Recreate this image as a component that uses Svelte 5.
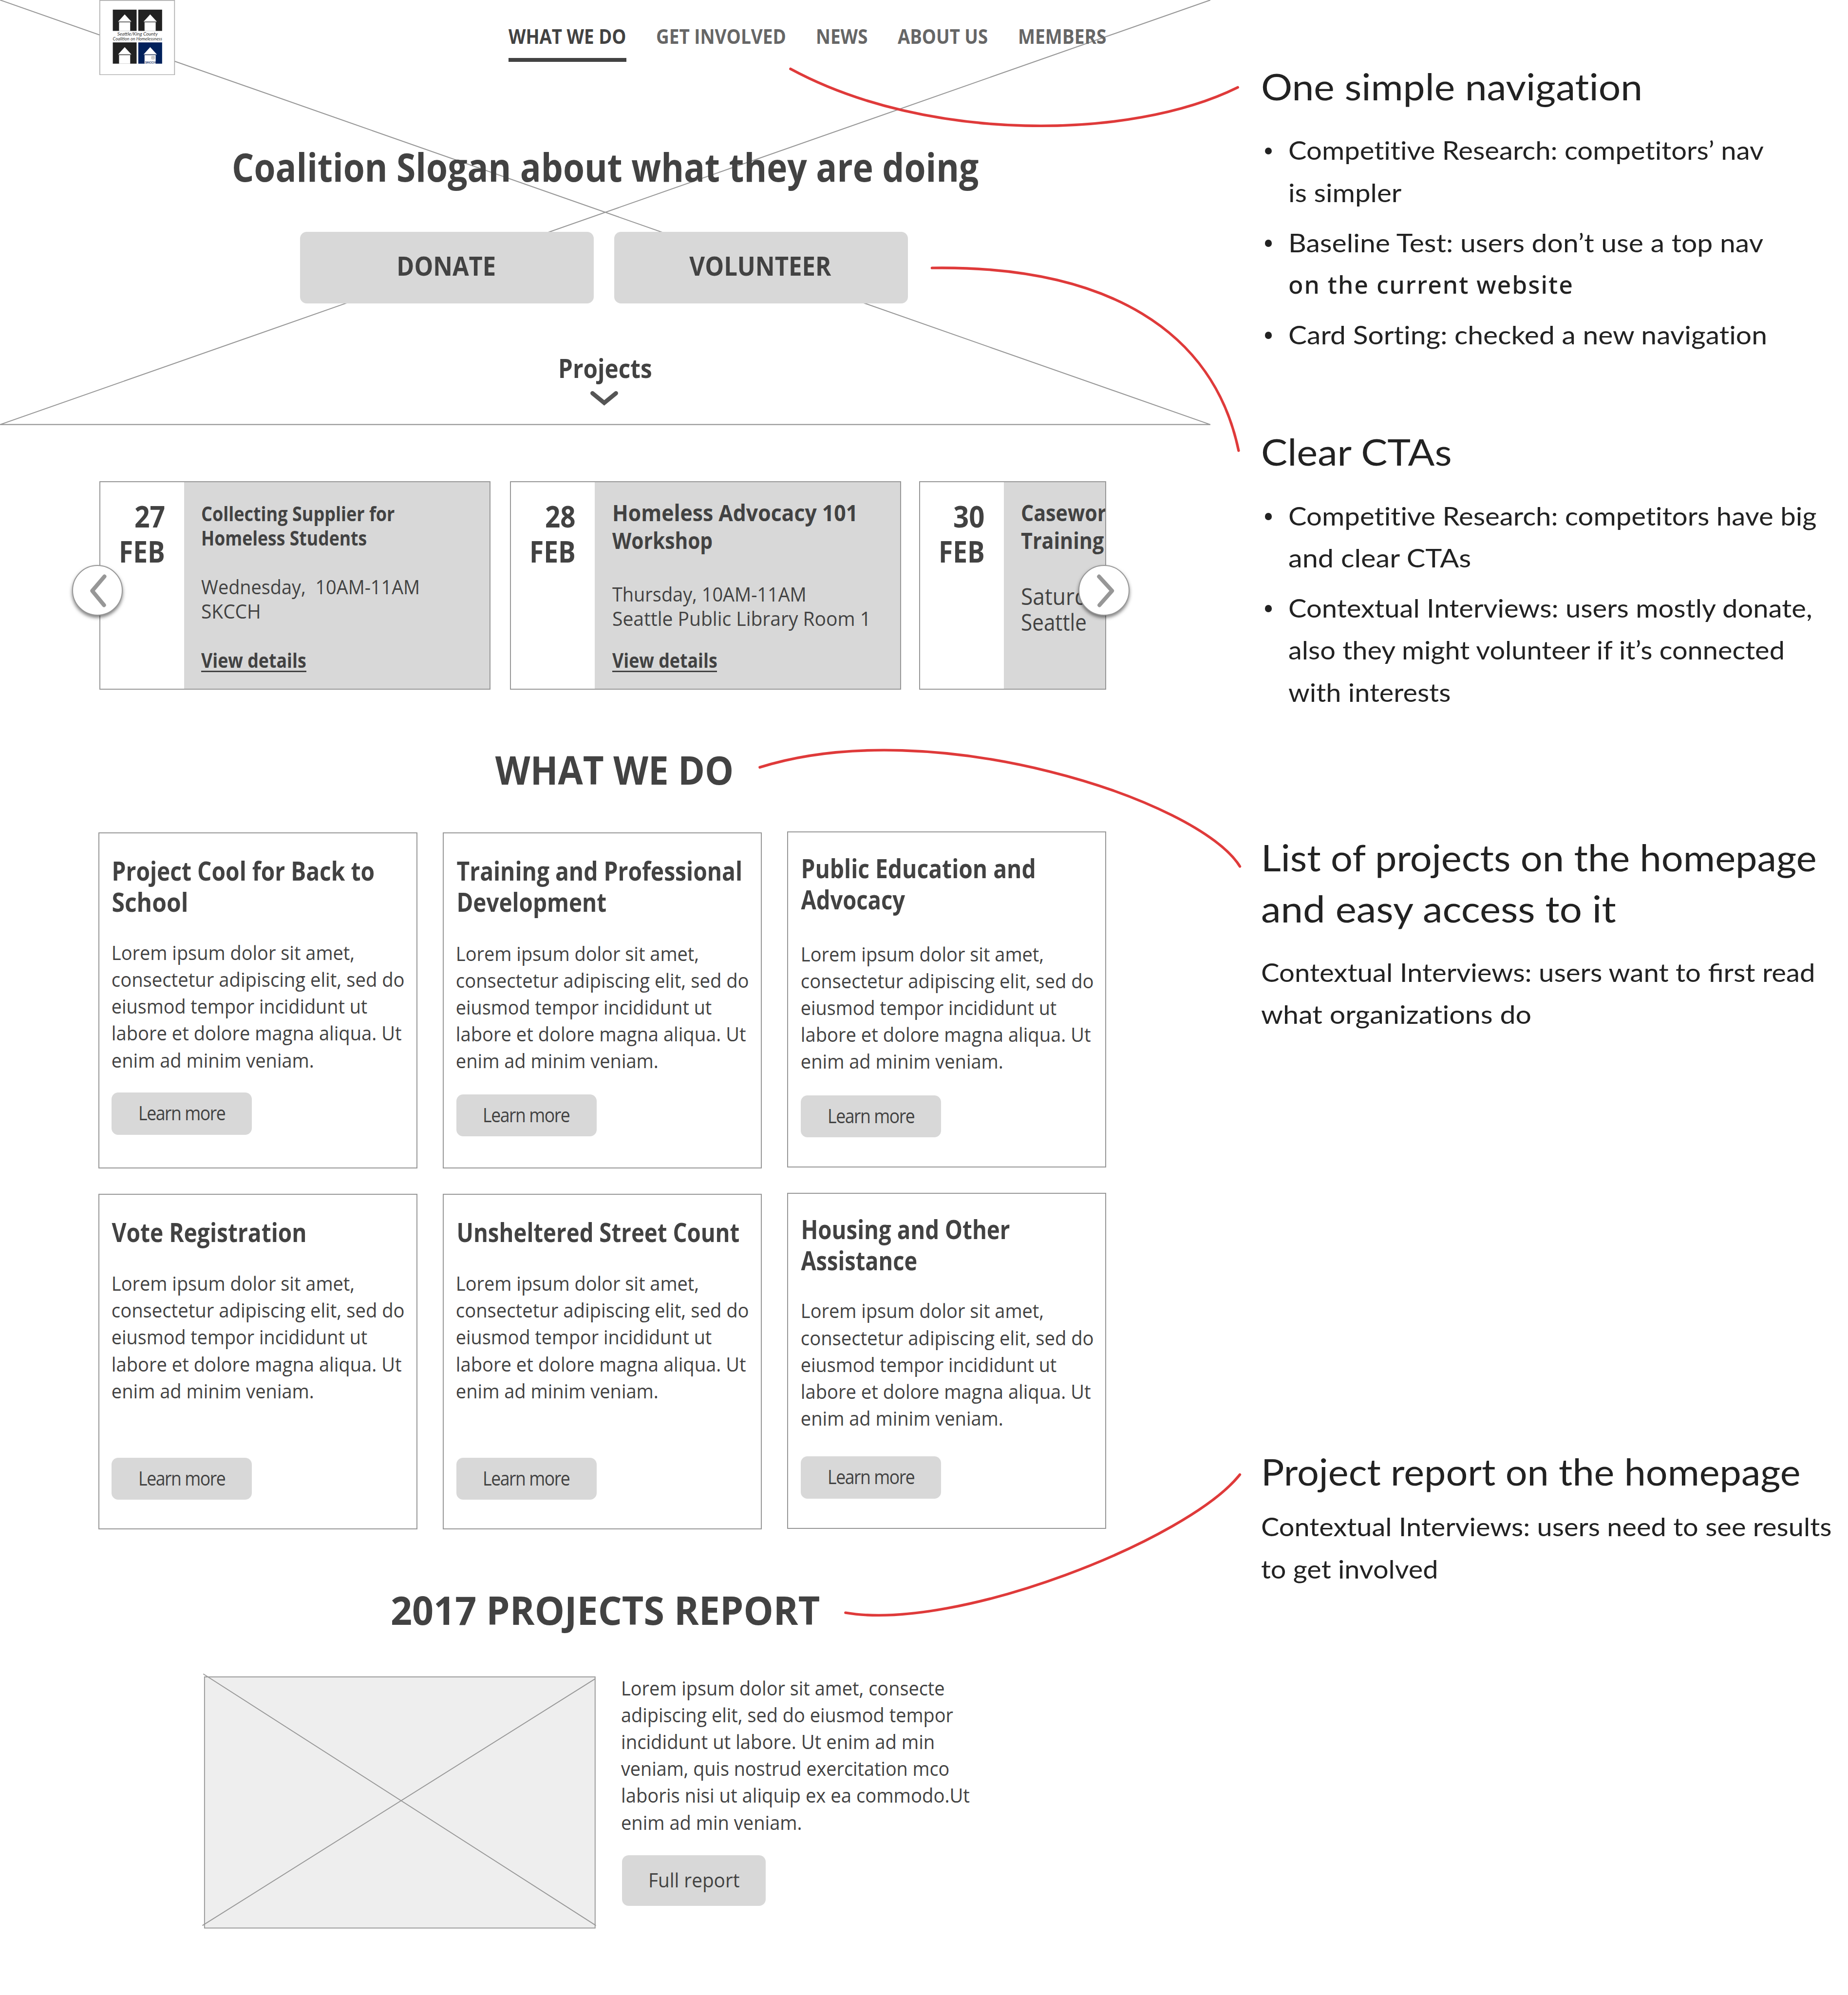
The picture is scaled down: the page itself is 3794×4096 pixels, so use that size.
<script>
  // Fits one line of text to a given ink width by scaling it horizontally.
  const ctx = document.createElement('canvas').getContext('2d');
  function fit(node, width) {
    const inner = node.firstElementChild;
    const cs = getComputedStyle(inner);
    ctx.font = `${cs.fontWeight} ${cs.fontSize} ${cs.fontFamily}`;
    ctx.letterSpacing = cs.letterSpacing === 'normal' ? '0px' : cs.letterSpacing;
    const m = ctx.measureText(inner.textContent);
    const ink = m.actualBoundingBoxRight + m.actualBoundingBoxLeft;
    const k = width / ink;
    node.style.width = `${m.width * k}px`;
    inner.style.transform = `scaleX(${k})`;
  }

  const nav = [['WHAT WE DO', 278], ['GET INVOLVED', 306], ['NEWS', 119], ['ABOUT US', 214], ['MEMBERS', 206]];

  const events = [
    {
      kind: 'small', day: ['27', 69.6],
      title: [['Collecting Supplier for', 459], ['Homeless Students', 390]],
      meta: [['Wednesday,  10AM-11AM', 517], ['SKCCH', 137]],
      link: true
    },
    {
      kind: 'medium', day: ['28', 69],
      title: [['Homeless Advocacy 101', 573.7], ['Workshop', 237.5]],
      meta: [['Thursday, 10AM-11AM', 458.5], ['Seattle Public Library Room 1', 604.6]],
      link: true
    },
    {
      kind: 'cut', day: ['30', 71],
      title: [['Casewor', 200], ['Training', 196.5]],
      meta: [['Saturd', 153], ['Seattle', 153]],
      link: false
    }
  ];

  const lorem = [
    ['Lorem ipsum dolor sit amet,', 572.5],
    ['consectetur adipiscing elit, sed do', 694],
    ['eiusmod tempor incididunt ut', 607],
    ['labore et dolore magna aliqua. Ut', 686.5],
    ['enim ad minim veniam.', 477.5]
  ];

  const columns = [
    [
      { kind: 'a', title: [['Project Cool for Back to', 620], ['School', 176.5]] },
      { kind: 'd', title: [['Vote Registration', 460.5]] }
    ],
    [
      { kind: 'b', title: [['Training and Professional', 676], ['Development', 351.5]] },
      { kind: 'd', title: [['Unsheltered Street Count', 668.5]] }
    ],
    [
      { kind: 'c', title: [['Public Education and', 551], ['Advocacy', 248]] },
      { kind: 'e', title: [['Housing and Other', 493], ['Assistance', 275]] }
    ]
  ];

  const report = [
    ['Lorem ipsum dolor sit amet, consecte', 765],
    ['adipiscing elit, sed do eiusmod tempor', 789],
    ['incididunt ut labore. Ut enim ad min', 741],
    ['veniam, quis nostrud exercitation mco', 780],
    ['laboris nisi ut aliquip ex ea commodo.Ut', 826],
    ['enim ad min veniam.', 426]
  ];

  const notes = [
    {
      kind: 'n1', head: [['One simple navigation', 898]],
      list: [
        [['Competitive Research: competitors’ nav', 1130], ['is simpler', 266]],
        [['Baseline Test: users don’t use a top nav', 1127], ['on the current website', 672, 'alt']],
        [['Card Sorting: checked a new navigation', 1136]]
      ]
    },
    {
      kind: 'n2', head: [['Clear CTAs', 449]],
      list: [
        [['Competitive Research: competitors have big', 1255], ['and clear CTAs', 434]],
        [['Contextual Interviews: users mostly donate,', 1244], ['also they might volunteer if it’s connected', 1182], ['with interests', 384]]
      ]
    },
    {
      kind: 'n3', head: [['List of projects on the homepage', 1314], ['and easy access to it', 845]],
      text: [['Contextual Interviews: users want to first read', 1314, 'ligatures'], ['what organizations do', 641]]
    },
    {
      kind: 'n4', head: [['Project report on the homepage', 1274]],
      text: [['Contextual Interviews: users need to see results', 1355], ['to get involved', 416]]
    }
  ];

  const tiles = [[32, 23], [92.7, 23], [32, 101], [92.7, 101]];
</script>

{#snippet line(l)}
  <span class="line {l[2] ?? ''}" use:fit={l[1]}><span class="glyphs">{l[0]}</span></span>
{/snippet}

<div class="page">
  <main class="site">
    <header class="hero">
      <svg class="cross" viewBox="0 0 2882 1012" aria-hidden="true">
        <path d="M0 0L2882 1011M2882 0L0 1011M0 1010.8H2882" />
      </svg>
      <div class="topbar">
        <svg class="logo" viewBox="0 0 180 179">
          <rect x="1" y="1" width="178" height="177" fill="#fff" stroke="#aeaeae" stroke-width="2" />
          {#each tiles as [x, y], i}
            <g transform="translate({x} {y})">
              <rect width="56.7" height="50.6" fill={i === 3 ? '#00205b' : '#222'} />
              <path d="M28.3 11.3L44 28.3H12.8Z M14.9 30.2H41.4V50.7H14.9Z" fill="#fff" />
              <path d="M12.8 29.2H44" stroke="#8d8d8d" stroke-width="1" />
            </g>
          {/each}
          <path d="M124.6 134h6.6v6.6h-6.6zM127.9 134v6.6M124.6 137.3h6.6" fill="none" stroke="#999" stroke-width="1" />
          <text class="script" x="42.5" y="85" textLength="96.5" lengthAdjust="spacingAndGlyphs">Seattle/King County</text>
          <text class="script" x="32" y="96.4" textLength="117.5" lengthAdjust="spacingAndGlyphs">Coalition on Homelessness</text>
          <text class="tiny" x="109" y="151.2" textLength="26" lengthAdjust="spacingAndGlyphs">SKCCH</text>
        </svg>
        <nav>
          {#each nav as item, i}
            <a class:active={i === 0}>{@render line(item)}</a>
          {/each}
        </nav>
      </div>
      <h1>{@render line(['Coalition Slogan about what they are doing', 1773])}</h1>
      <div class="ctas">
        <button>{@render line(['DONATE', 229])}</button>
        <button>{@render line(['VOLUNTEER', 338])}</button>
      </div>
      <div class="more">{@render line(['Projects', 217])}</div>
      <svg class="down" viewBox="0 0 80 45" aria-hidden="true"><path d="M12 8.5L40 31.5L68 8.5" /></svg>
    </header>

    <section class="carousel">
      {#each events as e}
        <article class="event {e.kind}">
          <div class="date">
            {@render line(e.day)}
            {@render line(['FEB', 102])}
          </div>
          <div class="info">
            <h3>{#each e.title as l}{@render line(l)}{/each}</h3>
            <p>{#each e.meta as l}{@render line(l)}{/each}</p>
            {#if e.link}<a class="details">{@render line(['View details', 249])}</a>{/if}
          </div>
        </article>
      {/each}
      <span class="arrow prev"><svg viewBox="0 0 121 121"><path d="M77 27.5L48 61.5L76 95.5" /></svg></span>
      <span class="arrow next"><svg viewBox="0 0 121 121"><path d="M48 27.5L79 61.5L49 95.5" /></svg></span>
    </section>

    <h2 class="what">{@render line(['WHAT WE DO', 563])}</h2>
    <section class="projects">
      {#each columns as col}
        <div class="column">
          {#each col as p}
            <article class="card {p.kind}">
              <h3>{#each p.title as l}{@render line(l)}{/each}</h3>
              <p>{#each lorem as l}{@render line(l)}{/each}</p>
              <button>{@render line(['Learn more', 203])}</button>
            </article>
          {/each}
        </div>
      {/each}
    </section>

    <h2 class="reporthead">{@render line(['2017 PROJECTS REPORT', 1018])}</h2>
    <section class="report">
      <svg class="picture" viewBox="0 0 932 600" aria-hidden="true">
        <rect x="1" y="1" width="930" height="598" />
        <path d="M-2 -6L933 593M930.5 6L-4 593" />
      </svg>
      <div class="summary">
        <p>{#each report as l}{@render line(l)}{/each}</p>
        <button>{@render line(['Full report', 213])}</button>
      </div>
    </section>
  </main>

  <aside class="notes">
    {#each notes as n}
      <section class={n.kind}>
        <h2>{#each n.head as l}{@render line(l)}{/each}</h2>
        {#if n.list}
          <ul>
            {#each n.list as item}
              <li><i class="dot"></i><div>{#each item as l}{@render line(l)}{/each}</div></li>
            {/each}
          </ul>
        {:else}
          <p>{#each n.text as l}{@render line(l)}{/each}</p>
        {/if}
      </section>
    {/each}
  </aside>

  <svg class="curves" viewBox="0 0 4400 4750" aria-hidden="true">
    <path d="M1882 164C2207 340 2692 334 2947 208" />
    <path d="M2219 638C2640 632 2890 790 2949 1073" />
    <path d="M1809 1827C2222 1697 2855 1905 2952 2063" />
    <path d="M2013 3840C2280 3885 2830 3665 2952 3511" />
  </svg>
</div>

<style>
  :global(body) { margin: 0; background: #fff; overflow: hidden; }
  .page {
    zoom: 0.8623;
    position: relative;
    display: flex;
    width: 4400px;
    height: 4750px;
    overflow: hidden;
    background: #fff;
    color: #424242;
    font-family: "Open Sans", "Noto Sans", sans-serif;
    font-size: 47px;
  }
  h1, h2, h3, p, ul { margin: 0; padding: 0; font-size: inherit; font-weight: inherit; list-style: none; }
  button { border: 0; padding: 0; background: #d8d8d8; color: inherit; font: inherit; display: flex; justify-content: center; align-items: flex-start; }
  .line { display: block; white-space: pre; }
  .glyphs { display: inline-block; transform-origin: 0 50%; }

  .site { width: 2882px; flex: none; }
  .site .glyphs { translate: 0 1px; }
  .card h3 .glyphs { translate: 0.5px 2px; }
  .card p .glyphs { translate: 1px 1px; }
  .card button .glyphs { translate: 0 1px; }
  .info .glyphs { translate: 0 1px; }
  .ctas .glyphs { translate: -2px 1px; }
  .what .glyphs { translate: 1px 1px; }
  .hero { position: relative; height: 1012px; }
  .cross { position: absolute; inset: 0; width: 2882px; height: 1012px; }
  .cross path { fill: none; stroke: #979797; stroke-width: 2.4; }
  .topbar { position: relative; display: flex; height: 179px; padding-left: 237px; }
  .logo { width: 180px; height: 179px; flex: none; }
  .script { font: italic 11.5px "Lato", sans-serif; fill: #333; }
  .tiny { font: bold 7px "Lato", sans-serif; fill: #00205b; }
  nav { display: flex; align-items: flex-start; gap: 71.2px; margin: 56px 0 0 794px; }
  nav a { line-height: 60px; font-weight: 700; color: #666; padding-bottom: 21.7px; height: 60px; }
  nav a.active { color: #424242; border-bottom: 10px solid #424242; }
  h1 { position: relative; display: flex; justify-content: center; margin-top: 156.5px; font-size: 94px; line-height: 120px; font-weight: 700; }
  .ctas { position: relative; display: flex; gap: 48px; margin-top: 96.5px; padding-left: 714.5px; }
  .ctas button { width: 699.5px; height: 170px; border-radius: 16px; font-size: 63px; font-weight: 700; line-height: 159px; }
  .more { position: relative; display: flex; justify-content: center; margin-top: 113.5px; font-size: 63px; font-weight: 700; line-height: 80px; }
  .down { position: relative; display: block; width: 80px; height: 45px; margin: 12px 0 0 1399px; }
  .down path { fill: none; stroke: #555; stroke-width: 10; stroke-linecap: round; }

  .carousel { position: relative; display: flex; width: 2398px; height: 496px; margin: 134px 0 0 236px; }
  .event { box-sizing: border-box; display: flex; flex: none; width: 932px; border: 2.4px solid #979797; overflow: hidden; margin-right: 46px; }
  .event.medium { margin-right: 41.8px; }
  .event.cut { width: 446px; margin-right: 0; }
  .date { box-sizing: border-box; width: 200px; flex: none; display: flex; flex-direction: column; align-items: flex-end; padding: 37.8px 45.5px 0 0; font-size: 70px; font-weight: 700; line-height: 84px; }
  .info { box-sizing: border-box; flex: 1; min-width: 0; display: flex; flex-direction: column; padding: 44.8px 0 39px 41px; background: #d8d8d8; }
  .info h3 { font-weight: 700; line-height: 58px; }
  .info p { margin-top: 57.8px; line-height: 58px; }
  .medium .info, .cut .info { padding-top: 37.7px; }
  .medium h3, .cut h3 { font-size: 55px; line-height: 66px; }
  .medium p { margin-top: 66.9px; }
  .cut p { margin-top: 69.2px; font-size: 55px; line-height: 61.6px; }
  .details { align-self: flex-start; margin-top: auto; height: 54px; font-weight: 700; line-height: 58px; border-bottom: 4px solid #424242; }
  .details .glyphs { translate: 0 0; }
  .arrow { position: absolute; top: 199px; box-sizing: border-box; width: 121px; height: 121px; border: 2.4px solid #979797; border-radius: 50%; background: #fff; box-shadow: 0 5px 9px rgba(0, 0, 0, 0.5); }
  .arrow svg { display: block; width: 121px; height: 121px; margin: -2px; }
  .arrow path { fill: none; stroke: #979797; stroke-width: 9.5; stroke-linecap: round; stroke-linejoin: round; }
  .prev { left: -64.5px; }
  .next { left: 2332px; }

  .what, .reporthead { display: flex; justify-content: center; font-size: 94px; line-height: 120px; font-weight: 700; margin-top: 129.4px; }
  .what { padding-left: 43px; }
  .projects { display: flex; gap: 60.7px; margin-top: 88.6px; padding-left: 234px; }
  .column { display: flex; flex-direction: column; gap: 60px; width: 759.5px; padding-top: 2px; }
  .column:last-child { padding-top: 0; }
  .card { box-sizing: border-box; height: 800px; border: 2.4px solid #979797; padding: 50.2px 0 0 29.7px; }
  .card h3 { font-size: 63px; line-height: 74px; font-weight: 700; }
  .card p { margin: 52px 0 47.3px -1.5px; line-height: 64px; }
  .card button { width: 334px; height: 100px; border-radius: 16px; line-height: 95.6px; letter-spacing: -0.04em; }
  .b p { margin: 54px 0 49.3px -1.5px; }
  .c { padding-top: 46.4px; }
  .c p { margin: 61px 0 50.4px -1.5px; }
  .d p { margin: 53.8px 0 128.2px -1.5px; }
  .e { padding-top: 45.4px; }
  .e p { margin: 52px 0 60.4px -1.5px; }

  .report { display: flex; align-items: flex-start; margin-top: 100.5px; padding-left: 486px; }
  .picture { width: 932px; height: 600px; overflow: visible; flex: none; }
  .picture rect { fill: #eee; stroke: #979797; stroke-width: 2.2; }
  .picture path { fill: none; stroke: #979797; stroke-width: 2.2; }
  .summary { margin: -6.4px 0 0 61px; line-height: 64px; }
  .summary button { margin: 48px 0 0 1.5px; width: 343px; height: 120.5px; border-radius: 16px; line-height: 116.6px; }

  /* A hair of tracking keeps Lato from joining "ti"; .ligatures restores "fi". */
  .notes { margin-left: 121px; color: #222; font-family: "Lato", "Open Sans", sans-serif; font-size: 61px; line-height: 100px; letter-spacing: 0.02px; }
  .notes h2 { font-size: 87px; line-height: 122px; }
  .notes h2 .glyphs { translate: 0 1.5px; }
  .ligatures { letter-spacing: normal; }
  .n1 { margin-top: 143.7px; }
  .n2 { margin-top: 167px; }
  .n3 { margin-top: 281.5px; }
  .n4 { margin-top: 976.5px; }
  .notes ul { display: flex; flex-direction: column; gap: 19.5px; margin-top: 42.2px; }
  .notes li { display: flex; align-items: flex-start; }
  .dot { width: 17px; height: 17px; flex: none; margin: 43px 38.8px 0 8.5px; border-radius: 50%; background: #222; }
  .n3 p { margin-top: 42px; }
  .n4 p { margin-top: 21.5px; }
  .alt { font-family: "Noto Sans", sans-serif; font-size: 58px; font-weight: 500; letter-spacing: 0.04em; }

  .curves { position: absolute; inset: 0; width: 4400px; height: 4750px; pointer-events: none; }
  .curves path { fill: none; stroke: #df3a3a; stroke-width: 6.2; stroke-linecap: round; }
</style>
